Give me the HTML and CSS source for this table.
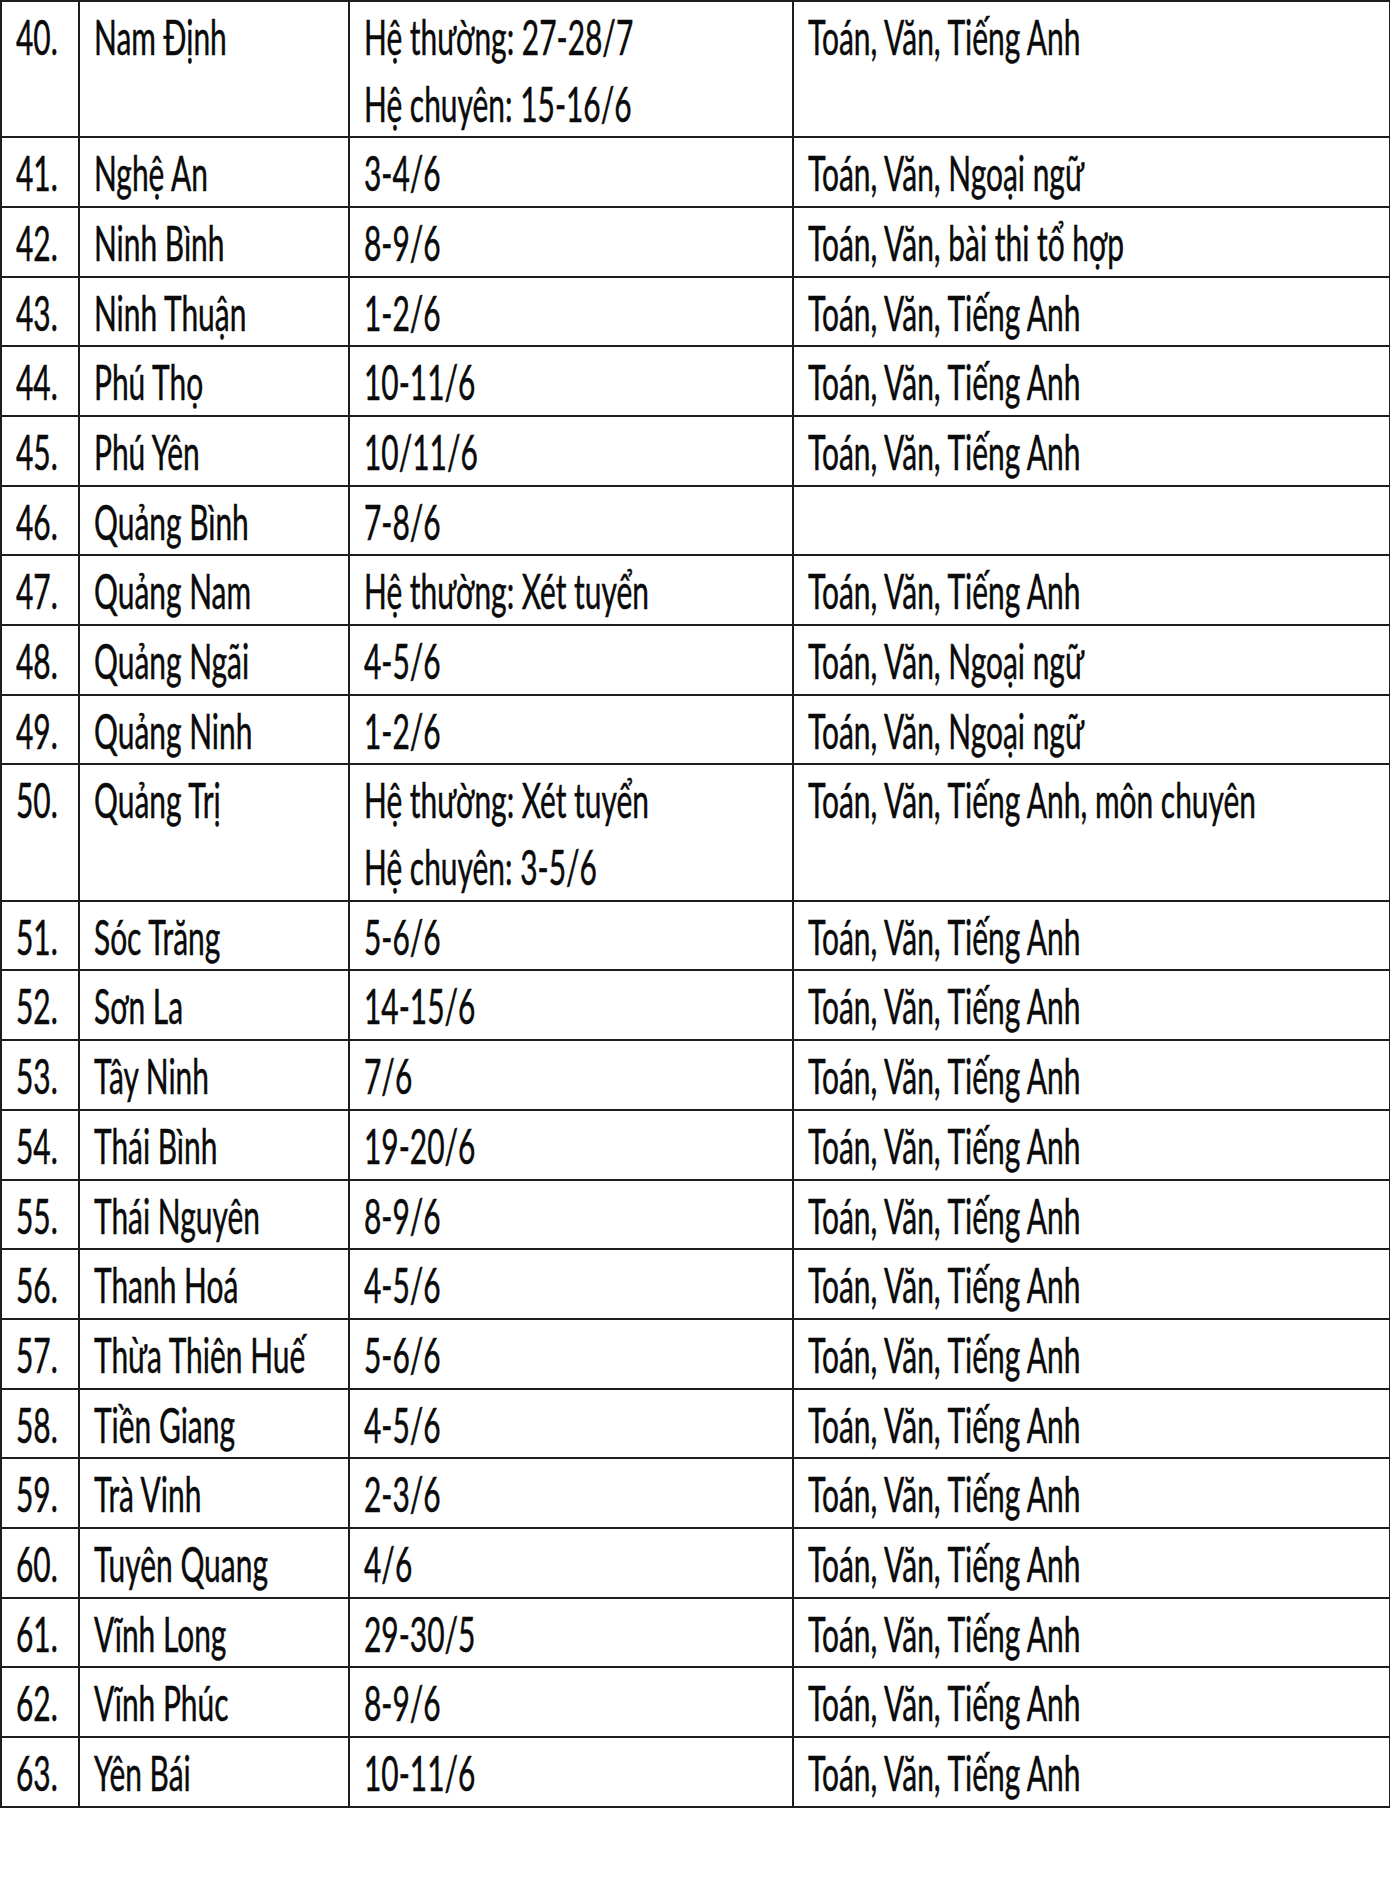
FILE: index.html
```html
<!DOCTYPE html>
<html lang="vi">
<head>
<meta charset="utf-8">
<title>Lịch thi</title>
<link rel="stylesheet" href="styles.css">
</head>
<body>
<table class="schedule">
  <colgroup>
    <col class="c-no"><col class="c-name"><col class="c-date"><col class="c-subj">
  </colgroup>
  <tbody>
    <tr><td><span class="t">40.</span></td><td><span class="t">Nam Định</span></td><td><span class="t">Hệ thường: 27-28/7<br>Hệ chuyên: 15-16/6</span></td><td><span class="t">Toán, Văn, Tiếng Anh</span></td></tr>
    <tr><td><span class="t">41.</span></td><td><span class="t">Nghệ An</span></td><td><span class="t">3-4/6</span></td><td><span class="t">Toán, Văn, Ngoại ngữ</span></td></tr>
    <tr><td><span class="t">42.</span></td><td><span class="t">Ninh Bình</span></td><td><span class="t">8-9/6</span></td><td><span class="t">Toán, Văn, bài thi tổ hợp</span></td></tr>
    <tr><td><span class="t">43.</span></td><td><span class="t">Ninh Thuận</span></td><td><span class="t">1-2/6</span></td><td><span class="t">Toán, Văn, Tiếng Anh</span></td></tr>
    <tr><td><span class="t">44.</span></td><td><span class="t">Phú Thọ</span></td><td><span class="t">10-11/6</span></td><td><span class="t">Toán, Văn, Tiếng Anh</span></td></tr>
    <tr><td><span class="t">45.</span></td><td><span class="t">Phú Yên</span></td><td><span class="t">10/11/6</span></td><td><span class="t">Toán, Văn, Tiếng Anh</span></td></tr>
    <tr><td><span class="t">46.</span></td><td><span class="t">Quảng Bình</span></td><td><span class="t">7-8/6</span></td><td></td></tr>
    <tr><td><span class="t">47.</span></td><td><span class="t">Quảng Nam</span></td><td><span class="t">Hệ thường: Xét tuyển</span></td><td><span class="t">Toán, Văn, Tiếng Anh</span></td></tr>
    <tr><td><span class="t">48.</span></td><td><span class="t">Quảng Ngãi</span></td><td><span class="t">4-5/6</span></td><td><span class="t">Toán, Văn, Ngoại ngữ</span></td></tr>
    <tr><td><span class="t">49.</span></td><td><span class="t">Quảng Ninh</span></td><td><span class="t">1-2/6</span></td><td><span class="t">Toán, Văn, Ngoại ngữ</span></td></tr>
    <tr><td><span class="t">50.</span></td><td><span class="t">Quảng Trị</span></td><td><span class="t">Hệ thường: Xét tuyển<br>Hệ chuyên: 3-5/6</span></td><td><span class="t">Toán, Văn, Tiếng Anh, môn chuyên</span></td></tr>
    <tr><td><span class="t">51.</span></td><td><span class="t">Sóc Trăng</span></td><td><span class="t">5-6/6</span></td><td><span class="t">Toán, Văn, Tiếng Anh</span></td></tr>
    <tr><td><span class="t">52.</span></td><td><span class="t">Sơn La</span></td><td><span class="t">14-15/6</span></td><td><span class="t">Toán, Văn, Tiếng Anh</span></td></tr>
    <tr><td><span class="t">53.</span></td><td><span class="t">Tây Ninh</span></td><td><span class="t">7/6</span></td><td><span class="t">Toán, Văn, Tiếng Anh</span></td></tr>
    <tr><td><span class="t">54.</span></td><td><span class="t">Thái Bình</span></td><td><span class="t">19-20/6</span></td><td><span class="t">Toán, Văn, Tiếng Anh</span></td></tr>
    <tr><td><span class="t">55.</span></td><td><span class="t">Thái Nguyên</span></td><td><span class="t">8-9/6</span></td><td><span class="t">Toán, Văn, Tiếng Anh</span></td></tr>
    <tr><td><span class="t">56.</span></td><td><span class="t">Thanh Hoá</span></td><td><span class="t">4-5/6</span></td><td><span class="t">Toán, Văn, Tiếng Anh</span></td></tr>
    <tr><td><span class="t">57.</span></td><td><span class="t">Thừa Thiên Huế</span></td><td><span class="t">5-6/6</span></td><td><span class="t">Toán, Văn, Tiếng Anh</span></td></tr>
    <tr><td><span class="t">58.</span></td><td><span class="t">Tiền Giang</span></td><td><span class="t">4-5/6</span></td><td><span class="t">Toán, Văn, Tiếng Anh</span></td></tr>
    <tr><td><span class="t">59.</span></td><td><span class="t">Trà Vinh</span></td><td><span class="t">2-3/6</span></td><td><span class="t">Toán, Văn, Tiếng Anh</span></td></tr>
    <tr><td><span class="t">60.</span></td><td><span class="t">Tuyên Quang</span></td><td><span class="t">4/6</span></td><td><span class="t">Toán, Văn, Tiếng Anh</span></td></tr>
    <tr><td><span class="t">61.</span></td><td><span class="t">Vĩnh Long</span></td><td><span class="t">29-30/5</span></td><td><span class="t">Toán, Văn, Tiếng Anh</span></td></tr>
    <tr><td><span class="t">62.</span></td><td><span class="t">Vĩnh Phúc</span></td><td><span class="t">8-9/6</span></td><td><span class="t">Toán, Văn, Tiếng Anh</span></td></tr>
    <tr><td><span class="t">63.</span></td><td><span class="t">Yên Bái</span></td><td><span class="t">10-11/6</span></td><td><span class="t">Toán, Văn, Tiếng Anh</span></td></tr>
  </tbody>
</table>
</body>
</html>
```
FILE: styles.css
```css
html, body {
  margin: 0;
  padding: 0;
  background: #ffffff;
}

body {
  font-family: "Lato", "Open Sans", "Noto Sans", sans-serif;
  color: #0a0a0a;
}

.schedule {
  table-layout: fixed;
  width: 1389px;
  border-collapse: separate;
  border-spacing: 0;
  border-top: 2px solid #1e1e1e;
  border-left: 2px solid #1e1e1e;
}

.c-no { width: 78px; }
.c-name { width: 270px; }
.c-date { width: 444px; }
.c-subj { width: 597px; }

.schedule td {
  border-right: 2px solid #1e1e1e;
  border-bottom: 2px solid #1e1e1e;
  padding: 0 0 1.1px 14px;
  vertical-align: top;
  font-size: 47.5px;
  line-height: 66.6px;
  white-space: nowrap;
  overflow: hidden;
}

.t {
  display: inline-block;
  transform: translateY(2px) scaleX(0.63);
  transform-origin: 0 50%;
  -webkit-text-stroke: 0.5px currentColor;
}
```
